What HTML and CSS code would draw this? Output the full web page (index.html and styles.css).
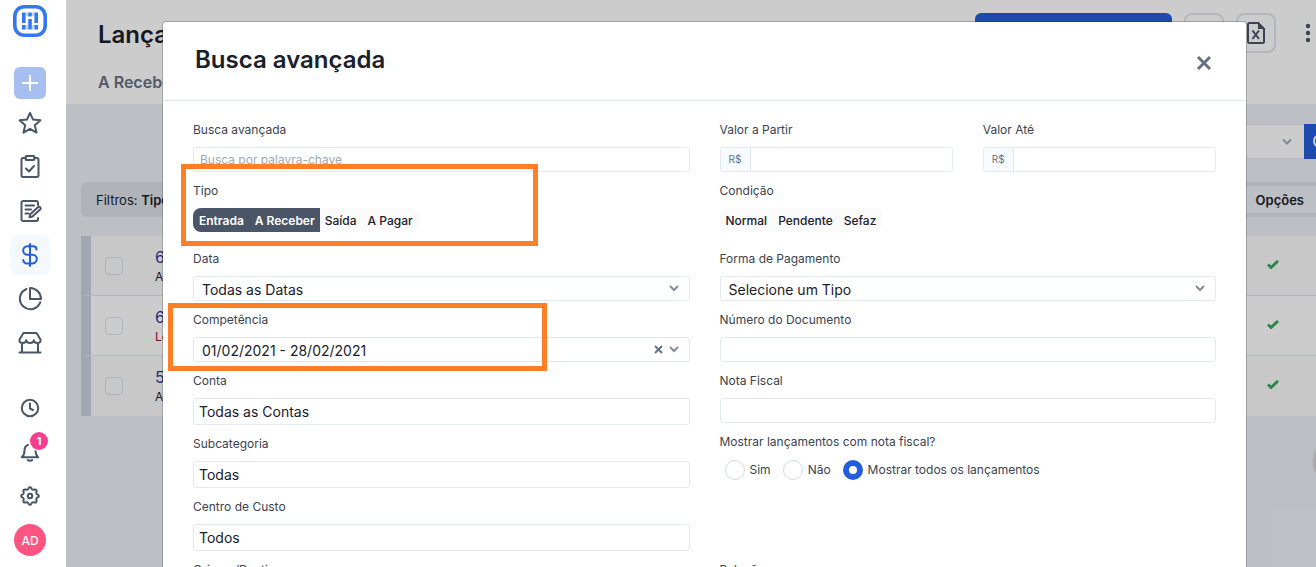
FILE: index.html
```html
<!DOCTYPE html>
<html lang="pt-BR">
<head>
<meta charset="utf-8">
<title>Lançamentos</title>
<link rel="stylesheet" href="styles.css">
</head>
<body>
<div class="app">
  <nav class="sidebar" aria-label="Menu principal">
    <a class="logo" href="#" aria-label="Início">
      <svg width="34" height="32" viewBox="0 0 34 32" fill="none" stroke="#3478f0">
        <rect x="1.800" y="1.800" width="30.400" height="28.400" rx="9.500" stroke-width="3.600"/>
        <g stroke-width="3.600"><path d="M10.800 7.500v10.500M10.800 20v4.500M17 7.500v4M17 14v10.500M23.200 7.500v10.500M23.200 20v4.500"/></g>
        <path d="M14 7.500v3.500M14 20v4.500M20 7.500v3.500M20 20v4.500" stroke-width="1.500" opacity=".4"/>
      </svg>
    </a>
    <button class="add" aria-label="Adicionar"><svg width="18" height="18" viewBox="0 0 18 18" fill="none" stroke="#fff" stroke-width="2"><path d="M9 1v16M1 9h16"/></svg></button>
    <div class="nav-group">
      <a class="nav-item" href="#" aria-label="Favoritos"><svg width="24" height="24" viewBox="0 0 24 24"><path d="M12 1.800l3 6.800 7.400.7-5.600 5 1.700 7.300L12 17.800l-6.500 3.800 1.700-7.300-5.600-5L9 8.600z"/></svg></a>
      <a class="nav-item" href="#" aria-label="Tarefas"><svg width="24" height="24" viewBox="0 0 24 24"><path d="M8 3H5.200A1.800 1.800 0 0 0 3.500 4.800v15.400A1.800 1.800 0 0 0 5.200 22h13.600a1.800 1.800 0 0 0 1.700-1.800V4.800A1.800 1.800 0 0 0 18.800 3H16M8.500 1h7a.8.8 0 0 1 .8.800v2.400a.8.8 0 0 1-.8.800h-7a.8.800 0 0 1-.8-.8V1.800a.8.8 0 0 1 .8-.8zM8 13.500l3 3 5-5.500"/></svg></a>
      <a class="nav-item" href="#" aria-label="Notas"><svg width="24" height="24" viewBox="0 0 24 24"><path d="M20 6V3.500A1.700 1.700 0 0 0 18.300 2H5.200A1.700 1.700 0 0 0 3.500 3.700v16.600A1.700 1.700 0 0 0 5.200 22h13.100a1.700 1.700 0 0 0 1.700-1.700V19M7.500 6.500h8.500M7.500 10.500h5.500M7.500 14.500h3M14.500 17.500l-3 .8.800-3 7.600-7a1.500 1.500 0 0 1 2.200 2.200z"/></svg></a>
      <a class="nav-item active" href="#" aria-label="Financeiro"><svg width="24" height="24" viewBox="0 0 24 24"><path d="M12 1v22M18.500 6.500c0-2-1.600-3.300-3.500-3.300H9.500a4.300 4.300 0 0 0 0 8.600h5a4.300 4.300 0 0 1 0 8.600H9c-2.100 0-3.700-1.500-3.700-3.500"/></svg></a>
      <a class="nav-item" href="#" aria-label="Relatórios"><svg width="24" height="24" viewBox="0 0 24 24"><path d="M8.500 2a10.500 10.500 0 1 0 13.800 13.200M12 1v11h11A11 11 0 0 0 12 1z"/></svg></a>
      <a class="nav-item" href="#" aria-label="Loja"><svg width="24" height="24" viewBox="0 0 24 24"><path d="M1.500 21.500h21M4 13v8.500M20 13v8.500M5.500 2h13l4 6.500c.3 2.500-1 3.500-3.200 3.500-2 0-3.500-.8-3.500-2.800 0 2-1.700 2.800-3.800 2.800s-3.800-.8-3.800-2.800c0 2-1.500 2.800-3.500 2.800-2.200 0-3.500-1-3.200-3.500z"/></svg></a>
    </div>
    <div class="nav-group nav-bottom">
      <a class="nav-item" href="#" aria-label="Histórico"><svg width="20" height="20" viewBox="0 0 20 20"><circle cx="10" cy="10" r="8.200"/><path d="M10 5.500v5l3 1.500"/></svg></a>
      <a class="nav-item" href="#" aria-label="Notificações"><svg width="20" height="20" viewBox="0 0 20 20"><path d="M8 3C5.500 3.800 4.500 6 4.500 8.500c0 3-.8 5.300-2.700 6.700h16.400c-1.900-1.400-2.500-3.700-2.700-6M7.800 18a2.500 1.500 0 0 0 4.400 0"/></svg><span class="badge">1</span></a>
      <a class="nav-item" href="#" aria-label="Configurações"><svg width="20" height="20" viewBox="0 0 20 20"><circle cx="10" cy="10" r="2.200"/><path d="M7.400 3.600Q8.700 3 8.700 1.900Q10 .4 11.300 1.900Q11.300 3 12.600 3.600Q13.900 4 14.700 3.400Q16.800 3.200 16.600 5.300Q16 6.100 16.400 7.400Q17 8.700 18.100 8.700Q19.600 10 18.100 11.300Q17 11.300 16.400 12.600Q16 13.900 16.600 14.700Q16.800 16.800 14.700 16.600Q13.900 16 12.600 16.400Q11.300 17 11.300 18.100Q10 19.600 8.700 18.100Q8.700 17 7.400 16.400Q6.100 16 5.300 16.600Q3.200 16.800 3.400 14.700Q4 13.900 3.600 12.600Q3 11.300 1.900 11.300Q.4 10 1.900 8.700Q3 8.700 3.600 7.400Q4 6.100 3.400 5.300Q3.200 3.200 5.300 3.400Q6.100 4 7.400 3.600z"/></svg></a>
    </div>
    <button class="avatar">AD</button>
  </nav>

  <main class="main">
    <header class="page-head">
      <div class="head-row">
        <h1>Lançamentos</h1>
        <div class="actions">
          <button class="primary" aria-label="Novo lançamento"></button>
          <button class="tool" aria-label="Imprimir"></button>
          <button class="tool" aria-label="Exportar planilha"><svg width="20" height="24" viewBox="0 0 20 24" fill="none" stroke="#4a5568" stroke-width="2"><path d="M12 2H3.500A1.500 1.500 0 0 0 2 3.500v17A1.500 1.500 0 0 0 3.500 22h13a1.500 1.500 0 0 0 1.500-1.500V8zM6.500 9.500l6.500 8.500M13 9.500L6.500 18"/><path d="M13 3v4h4z" fill="#4a5568"/></svg></button>
          <button class="more" aria-label="Mais opções"><svg width="6" height="20" viewBox="0 0 6 20" fill="#4a5568"><circle cx="3" cy="3" r="2.200"/><circle cx="3" cy="10" r="2.200"/><circle cx="3" cy="17" r="2.200"/></svg></button>
        </div>
      </div>
      <a class="tab" href="#">A Receber</a>
    </header>
    <div class="search-row">
      <button class="period" aria-label="Período"><svg width="10" height="8" viewBox="0 0 10 8" fill="none" stroke="#a0aec0" stroke-width="2"><path d="M1 1.500l4 4 4-4"/></svg></button>
      <button class="search" aria-label="Buscar"><svg width="18" height="18" viewBox="0 0 18 18" fill="none" stroke="#fff" stroke-width="2"><circle cx="8" cy="8" r="6"/><path d="M12.500 12.500l4 4"/></svg></button>
    </div>
    <div class="filters"><span>Filtros: <b>Tipo</b></span><span class="options">Opções</span></div>
    <table class="rows">
      <tr><td class="pick"><input type="checkbox" aria-label="Selecionar"></td><td class="info"><a href="#">60</a><small>A</small></td><td class="ok"><svg width="12" height="9" viewBox="0 0 12 9"><path d="M1 4.500l3 3L11 1"/></svg></td></tr>
      <tr><td class="pick"><input type="checkbox" aria-label="Selecionar"></td><td class="info"><a href="#">60</a><small class="late">Lo</small></td><td class="ok"><svg width="12" height="9" viewBox="0 0 12 9"><path d="M1 4.500l3 3L11 1"/></svg></td></tr>
      <tr><td class="pick"><input type="checkbox" aria-label="Selecionar"></td><td class="info"><a href="#">50</a><small>A</small></td><td class="ok"><svg width="12" height="9" viewBox="0 0 12 9"><path d="M1 4.500l3 3L11 1"/></svg></td></tr>
    </table>
    <button class="help" aria-label="Ajuda"></button>
    <div class="overlay">
      <section class="modal" role="dialog" aria-labelledby="modal-title">
        <header class="modal-head">
          <h2 id="modal-title">Busca avançada</h2>
          <button class="close" aria-label="Fechar"><svg width="16" height="16" viewBox="0 0 16 16" fill="none" stroke="#667085" stroke-width="3"><path d="M2 2l12 12M14 2L2 14"/></svg></button>
        </header>
        <form class="form">
          <div class="col">
            <div class="field"><label for="q">Busca avançada</label><input class="control small" id="q" type="text" placeholder="Busca por palavra-chave"></div>
            <div class="field field-chips"><span class="label" id="l-tipo">Tipo</span>
              <div class="chips" role="group" aria-labelledby="l-tipo"><button type="button" class="on">Entrada</button><button type="button" class="on">A Receber</button><button type="button">Saída</button><button type="button">A Pagar</button></div>
              <span class="mark mark-type"></span>
            </div>
            <div class="field"><label for="data">Data</label><div class="combo"><select class="control" id="data"><option>Todas as Datas</option></select><svg class="chev" width="10" height="7" viewBox="0 0 10 7"><path d="M1 1l4 4 4-4"/></svg></div></div>
            <div class="field"><label for="comp">Competência</label><div class="combo"><input class="control" id="comp" type="text" value="01/02/2021 - 28/02/2021"><button type="button" class="clear" aria-label="Limpar"><svg width="9" height="9" viewBox="0 0 9 9" fill="none" stroke="#667085" stroke-width="2"><path d="M1 1l7 7M8 1L1 8"/></svg></button><svg class="chev" width="10" height="7" viewBox="0 0 10 7"><path d="M1 1l4 4 4-4"/></svg></div>
              <span class="mark mark-period"></span>
            </div>
            <div class="field"><label for="conta">Conta</label><input class="control tall" id="conta" type="text" value="Todas as Contas"></div>
            <div class="field"><label for="sub">Subcategoria</label><input class="control tall" id="sub" type="text" value="Todas"></div>
            <div class="field"><label for="cc">Centro de Custo</label><input class="control tall" id="cc" type="text" value="Todos"></div>
            <div class="field"><label for="od">Origem/Destino</label><input class="control tall" id="od" type="text"></div>
          </div>
          <div class="col">
            <div class="pair">
              <div class="field"><label for="v1">Valor a Partir</label><div class="money"><span>R$</span><input id="v1" type="text"></div></div>
              <div class="field"><label for="v2">Valor Até</label><div class="money"><span>R$</span><input id="v2" type="text"></div></div>
            </div>
            <div class="field field-chips"><span class="label" id="l-cond">Condição</span>
              <div class="chips" role="group" aria-labelledby="l-cond"><button type="button">Normal</button><button type="button">Pendente</button><button type="button">Sefaz</button></div>
            </div>
            <div class="field"><label for="fp">Forma de Pagamento</label><div class="combo"><select class="control" id="fp"><option>Selecione um Tipo</option></select><svg class="chev" width="10" height="7" viewBox="0 0 10 7"><path d="M1 1l4 4 4-4"/></svg></div></div>
            <div class="field"><label for="nd">Número do Documento</label><input class="control" id="nd" type="text"></div>
            <div class="field"><label for="nf">Nota Fiscal</label><input class="control" id="nf" type="text"></div>
            <fieldset class="radios"><legend>Mostrar lançamentos com nota fiscal?</legend>
              <div class="radio-row">
                <label><input type="radio" name="fiscal">Sim</label>
                <label><input type="radio" name="fiscal">Não</label>
                <label><input type="radio" name="fiscal" checked>Mostrar todos os lançamentos</label>
              </div>
            </fieldset>
            <div class="field"><label for="rel">Relação</label><input class="control" id="rel" type="text"></div>
          </div>
        </form>
      </section>
    </div>
  </main>
</div>
</body>
</html>
```
FILE: styles.css
```css
* { box-sizing: border-box; }
body { margin: 0; font-family: Inter, "Liberation Sans", sans-serif; font-size: 13px; color: #1a202c; }
button, input, select { font: inherit; color: inherit; margin: 0; }
button { border: 0; padding: 0; background: none; display: flex; align-items: center; justify-content: center; }
a { color: inherit; text-decoration: none; }
h1, h2 { margin: 0; font-size: 24px; line-height: 32px; font-weight: 600; }

.app { display: flex; height: 100vh; overflow: hidden; }

.sidebar { flex: none; width: 66px; padding: 5px 6px 0 0; background: #fff; display: flex; flex-direction: column; align-items: center; }
.logo { display: flex; }
.add { width: 32px; height: 32px; margin-top: 30px; border-radius: 6px; background: #a7bff0; }
.nav-group { display: flex; flex-direction: column; gap: 4px; margin-top: 4px; }
.nav-bottom { margin-top: 25px; }
.nav-item { position: relative; width: 40px; height: 40px; border-radius: 8px; display: flex; align-items: center; justify-content: center; }
.nav-item svg { fill: none; stroke: #4a5568; stroke-width: 2; stroke-linejoin: round; stroke-linecap: round; }
.nav-item.active { background: #f4f8ff; }
.nav-item.active svg { stroke: #235ddb; }
.badge { position: absolute; top: 0; right: 2px; width: 18px; height: 18px; border-radius: 9px; background: #f43f8e; color: #fff; font-size: 11px; font-weight: 700; line-height: 18px; text-align: center; }
.avatar { width: 32px; height: 32px; margin-top: 8px; border-radius: 16px; background: #ff5580; color: #fff; font-size: 12px; font-weight: 500; }

.main { position: relative; flex: 1; min-width: 0; overflow: hidden; background: #ecf1f7; }
.page-head { height: 104px; padding: 13px 5px 0 32px; background: #fff; }
.head-row { display: flex; justify-content: space-between; }
.head-row h1 { padding-top: 6px; }
.actions { display: flex; gap: 12px; }
.primary { width: 197px; height: 40px; border-radius: 6px; background: #235ddb; }
.tool { width: 40px; height: 40px; border: 2px solid #dfe5ee; border-radius: 8px; }
.more { width: 6px; height: 40px; margin-left: 17px; }
.tab { display: block; padding-top: 19px; font-size: 16px; line-height: 20px; font-weight: 600; color: #667085; }
.search-row { display: flex; justify-content: flex-end; margin: 20px 0 23px; }
.period { width: 120px; height: 35px; padding-right: 12px; justify-content: flex-end; background: #fff; border: 1px solid #e2e8f0; border-right: 0; }
.search { width: 12px; height: 35px; padding-left: 8px; justify-content: flex-start; overflow: hidden; background: #235ddb; }
.search svg { flex: none; }
.filters { display: flex; justify-content: space-between; align-items: center; height: 35px; margin-left: 15px; padding-left: 15px; border-radius: 6px 0 0 6px; background: #dde2e9; font-size: 13px; }
.filters b { font-weight: 600; }
.options { padding: 4px 12px 3px 20px; line-height: 20px; font-weight: 600; background: #ecf1f7; }

.rows { width: calc(100% - 15px); margin: 19px 0 0 15px; border-spacing: 0; }
.rows tr { background: #fafafa; }
.rows tr:nth-child(2) { background: #fff; }
.rows td { height: 60px; padding: 0; vertical-align: middle; border-bottom: 1px solid #e2e8f0; }
.rows tr:last-child td { border-bottom: 0; }
.rows .pick { width: 74px; border-left: 10px solid #cad2e1; }
.pick input { appearance: none; display: block; width: 18px; height: 18px; margin-left: 14px; border: 1px solid #dbe1ea; border-radius: 4px; }
.info a { display: block; font-size: 16px; line-height: 22px; color: #2a3a9c; }
.info small { display: block; font-size: 12px; line-height: 18px; }
.info .late { color: #8f1038; }
.rows .ok { width: 49px; padding-bottom: 3px; }
.ok svg { display: block; fill: none; stroke: #38a865; stroke-width: 3; }
.help { position: absolute; top: 440px; right: -43px; width: 44px; height: 44px; border-radius: 22px; background: #ddd; box-shadow: 0 0 4px #999; }

.overlay { position: absolute; inset: 0; padding: 21px 69px 0 96px; background: rgba(0, 0, 0, .2); }
.modal { background: #fff; background-clip: padding-box; border: 1px solid rgba(0, 0, 0, .2); border-radius: 4px 4px 0 0; }
.modal-head { display: flex; justify-content: space-between; align-items: center; height: 79px; padding: 0 34px 2px 32px; border-bottom: 1px solid #e2e6ee; }
.close { height: 16px; margin-top: 6px; }
.form { display: grid; grid-template-columns: repeat(2, minmax(0, 1fr)); gap: 30px; padding: 20px 30px; color: #3c4250; font-size: 12px; }

.field { position: relative; margin-bottom: 10px; }
.field > label, .label, legend { display: block; margin-bottom: 8px; line-height: 18px; }
.control { display: block; width: 100%; height: 25px; padding: 2px 8px 0; border: 1px solid #e2e8f0; border-radius: 3px; background: #fff; font-size: 14px; color: #1a202c; appearance: none; outline: 0; }
.control.small { padding: 0 6px; font-size: 12px; }
.control::placeholder { color: #a0a8b8; opacity: 1; }
.control.tall { height: 27px; padding: 0 5px; }
.combo { position: relative; }
.chev { position: absolute; right: 11px; top: 9px; fill: none; stroke: #858c9c; stroke-width: 2; }
.clear { position: absolute; right: 27px; top: 8px; height: 9px; }
.field-chips { margin-bottom: 18px; }
.chips { display: inline-flex; height: 24px; padding-right: 1px; border-radius: 8px; overflow: hidden; background: #fafafa; vertical-align: top; }
.chips button { padding: 1px 5px 0 6px; font-weight: 500; color: #1a202c; }
.chips .on { background: #4a5568; color: #fff; font-weight: 600; }
.chips .on + button:not(.on) { padding-left: 5px; }
.mark { position: absolute; border: 5px solid #ff7f27; pointer-events: none; }
.mark-type { left: -12px; top: -18px; width: 357px; height: 82px; z-index: 1; }
.mark-period { left: -25px; top: -8px; width: 379px; height: 68px; z-index: 1; }

.pair { display: grid; grid-template-columns: repeat(2, minmax(0, 1fr)); gap: 30px; }
.money { display: flex; height: 25px; border: 1px solid #e2e8f0; border-radius: 3px; overflow: hidden; }
.money span { width: 30px; flex: none; border-right: 1px solid #e2e8f0; background: #f7fbff; font-size: 10px; line-height: 23px; text-align: center; color: #667085; }
.money input { flex: 1; min-width: 0; border: 0; outline: 0; }
.radios { min-width: 0; min-height: 128px; margin: 0; padding: 0; border: 0; }
legend { padding: 0; }
.radio-row { display: flex; gap: 12px; padding: 1px 0 0 5px; }
.radio-row label { display: flex; align-items: center; gap: 5px; line-height: 20px; }
.radio-row input { appearance: none; width: 20px; height: 20px; border: 1px solid #d3dae6; border-radius: 10px; background: #fff; }
.radio-row input:checked { border: 6px solid #235ddb; }
```
